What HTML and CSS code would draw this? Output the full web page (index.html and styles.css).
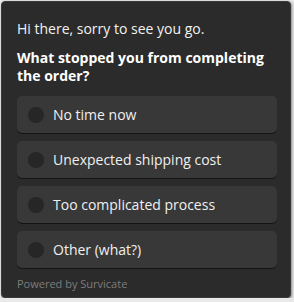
FILE: index.html
```html
<!DOCTYPE html>
<html>
<head>
<meta charset="utf-8">
<link rel="stylesheet" href="styles.css">
</head>
<body>
<div class="panel">
  <p class="intro">Hi there, sorry to see you go.</p>
  <p class="question">What stopped you from completing the order?</p>
  <div class="options">
    <div class="option"><span class="radio"></span><span class="label">No time now</span></div>
    <div class="option"><span class="radio"></span><span class="label">Unexpected shipping cost</span></div>
    <div class="option"><span class="radio"></span><span class="label">Too complicated process</span></div>
    <div class="option"><span class="radio"></span><span class="label">Other (what?)</span></div>
  </div>
  <p class="powered">Powered by Survicate</p>
</div>
</body>
</html>
```
FILE: styles.css
```css
html, body {
  margin: 0;
  padding: 0;
  background: #e9e9e9;
}
body {
  padding: 1px 0 0 1px;
  font-family: "Open Sans", "Liberation Sans", sans-serif;
}
.panel {
  box-sizing: border-box;
  width: 290px;
  height: 297px;
  background: #2b2b2b;
  border: 1px solid #3a3a3a;
  border-radius: 4px;
  box-shadow: 1px 1px 3px rgba(0,0,0,0.45);
  padding: 17px 13px 0 15px;
  display: flex;
  flex-direction: column;
}
.intro {
  margin: 0;
  font-size: 14px;
  line-height: 20px;
  color: #f2f2f2;
}
.question {
  margin: 10px 0 0;
  font-size: 14px;
  font-weight: 700;
  line-height: 18px;
  color: #ffffff;
}
.options {
  margin-top: 11px;
  display: flex;
  flex-direction: column;
  gap: 8px;
}
.option {
  height: 37px;
  background: #383838;
  border-radius: 5px;
  box-shadow: 0 1px 0 #141414;
  display: flex;
  align-items: center;
  padding-left: 11px;
}
.radio {
  width: 16px;
  height: 16px;
  border-radius: 50%;
  background: #262626;
  flex: none;
}
.label {
  margin-left: 9px;
  font-size: 14px;
  color: #f0f0f0;
}
.powered {
  margin: 8px 0 0;
  font-size: 11px;
  line-height: 15px;
  color: #7d7d7d;
}
```
